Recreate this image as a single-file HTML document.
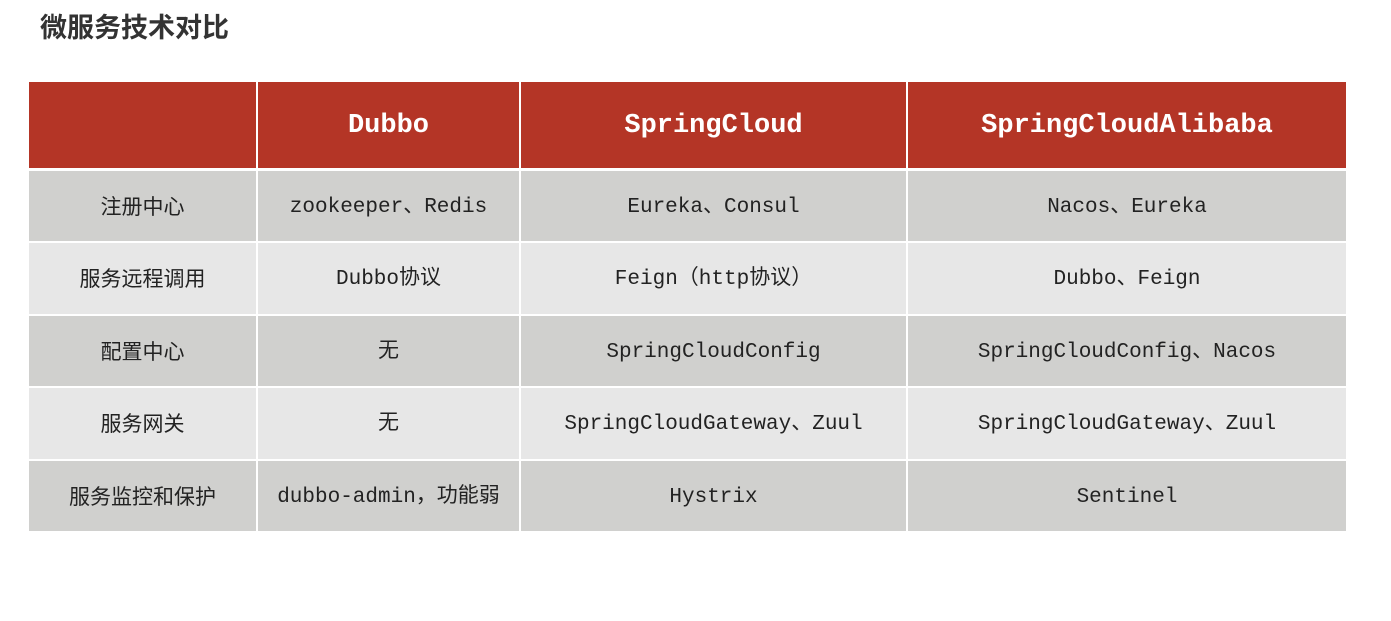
<!DOCTYPE html>
<html><head><meta charset="utf-8"><style>
body{margin:0;width:1391px;height:621px;background:#fff;position:relative;overflow:hidden;font-family:"Liberation Mono","Noto Sans CJK SC",monospace;}
.t{position:absolute;left:40px;top:10px;font:bold 27px/36px "Liberation Sans","Noto Sans CJK SC",sans-serif;color:#333;letter-spacing:0px}
.c{position:absolute;display:flex;align-items:center;justify-content:center;font-size:21px;line-height:1;color:#222;white-space:nowrap}
.c span{line-height:1;display:inline-block;padding-top:2px}
.h{background:#b43526;color:#fff;font-weight:bold;font-size:27px}
.cn{font-family:"Liberation Sans","Noto Sans CJK SC",sans-serif;font-size:21px}
</style></head><body>
<div class="t">微服务技术对比</div>
<div id="tb"></div>
<script>
const cols=[[29,227],[258,261],[521,385],[908,438]];
const rows=[[82,86],[171,70],[243,71],[316,70],[388,71],[461,70]];
const data=[["","Dubbo","SpringCloud","SpringCloudAlibaba"],
["注册中心","zookeeper、Redis","Eureka、Consul","Nacos、Eureka"],
["服务远程调用","Dubbo协议","Feign（http协议）","Dubbo、Feign"],
["配置中心","无","SpringCloudConfig","SpringCloudConfig、Nacos"],
["服务网关","无","SpringCloudGateway、Zuul","SpringCloudGateway、Zuul"],
["服务监控和保护","dubbo-admin，功能弱","Hystrix","Sentinel"]];
let h="";
rows.forEach((r,i)=>{cols.forEach((c,j)=>{
let bg=i==0?"":(i%2==1?"background:#d0d0ce":"background:#e7e7e7");
let cls="c"+(i==0?" h":"")+(j==0&&i>0?" cn":"");
h+=`<div class="${cls}" style="left:${c[0]}px;top:${r[0]}px;width:${c[1]}px;height:${r[1]}px;${bg}"><span>${data[i][j]}</span></div>`;});});
document.getElementById("tb").outerHTML=h;
</script>
</body></html>
